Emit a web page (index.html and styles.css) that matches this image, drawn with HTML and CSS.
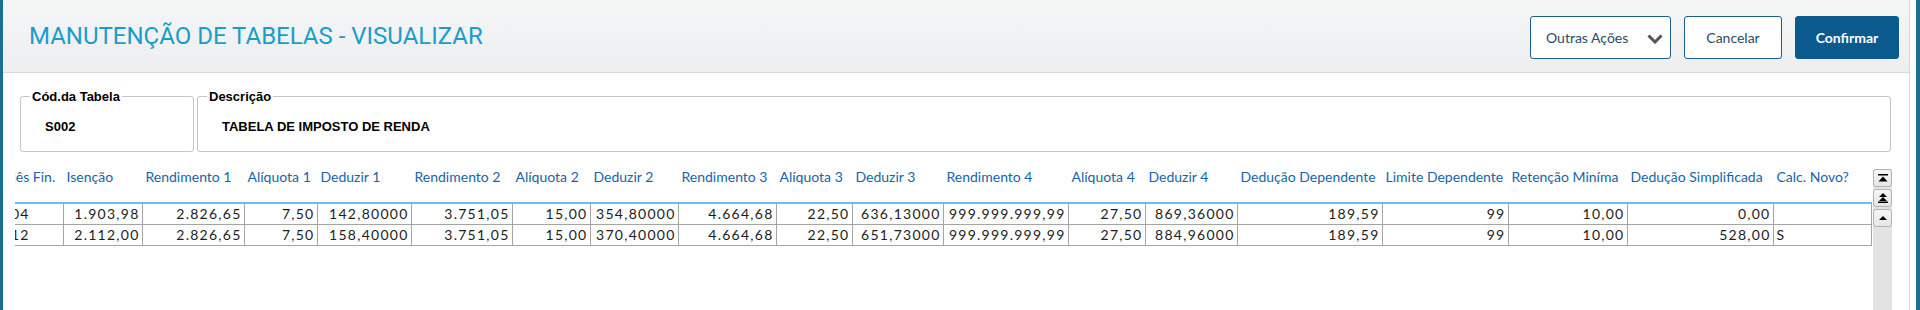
FILE: index.html
```html
<!DOCTYPE html>
<html lang="pt-BR">
  <head>
    <meta charset="UTF-8" />
    <meta name="viewport" content="width=device-width, initial-scale=1.0" />
    <title>Manutenção de Tabelas</title>
    <link rel="stylesheet" href="styles.css">
  </head>
  <body>
    <div class="screen">
      <div class="edge-left"></div>
      <main class="page">
        <header class="topbar">
          <h1>MANUTENÇÃO DE TABELAS - VISUALIZAR</h1>
          <div class="actions">
            <button class="btn btn-more">
              <span>Outras Ações</span>
              <svg width="16" height="10" viewBox="0 0 16 10"><path d="M1.5 1.5 L8 8 L14.5 1.5" fill="none" stroke="#555" stroke-width="3"/></svg>
            </button>
            <button class="btn">Cancelar</button>
            <button class="btn btn-primary">Confirmar</button>
          </div>
        </header>

        <div class="fields">
          <fieldset class="group group-code">
            <legend>Cód.da Tabela</legend>
            <div class="value">S002</div>
          </fieldset>
          <fieldset class="group group-desc">
            <legend>Descrição</legend>
            <div class="value">TABELA DE IMPOSTO DE RENDA</div>
          </fieldset>
        </div>

        <div class="browse">
          <div class="grid-view">
            <table>
              <colgroup>
                <col style="width:68px"><col style="width:79px"><col style="width:102px"><col style="width:73px">
                <col style="width:94px"><col style="width:101px"><col style="width:78px"><col style="width:88px">
                <col style="width:98px"><col style="width:76px"><col style="width:91px"><col style="width:125px">
                <col style="width:77px"><col style="width:92px"><col style="width:145px"><col style="width:126px">
                <col style="width:119px"><col style="width:146px"><col style="width:98px">
              </colgroup>
              <thead>
                <tr>
                  <th class="first">Mês Fin.</th>
                  <th>Isenção</th>
                  <th>Rendimento 1</th>
                  <th>Alíquota 1</th>
                  <th>Deduzir 1</th>
                  <th>Rendimento 2</th>
                  <th>Alíquota 2</th>
                  <th>Deduzir 2</th>
                  <th>Rendimento 3</th>
                  <th>Alíquota 3</th>
                  <th>Deduzir 3</th>
                  <th>Rendimento 4</th>
                  <th>Alíquota 4</th>
                  <th>Deduzir 4</th>
                  <th>Dedução Dependente</th>
                  <th>Limite Dependente</th>
                  <th>Retenção Miníma</th>
                  <th>Dedução Simplificada</th>
                  <th>Calc. Novo?</th>
                </tr>
              </thead>
              <tbody>
                <tr>
                  <td class="first">04</td>
                  <td>1.903,98</td>
                  <td>2.826,65</td>
                  <td>7,50</td>
                  <td>142,80000</td>
                  <td>3.751,05</td>
                  <td>15,00</td>
                  <td>354,80000</td>
                  <td>4.664,68</td>
                  <td>22,50</td>
                  <td>636,13000</td>
                  <td>999.999.999,99</td>
                  <td>27,50</td>
                  <td>869,36000</td>
                  <td>189,59</td>
                  <td>99</td>
                  <td>10,00</td>
                  <td>0,00</td>
                  <td class="text"></td>
                </tr>
                <tr>
                  <td class="first">12</td>
                  <td>2.112,00</td>
                  <td>2.826,65</td>
                  <td>7,50</td>
                  <td>158,40000</td>
                  <td>3.751,05</td>
                  <td>15,00</td>
                  <td>370,40000</td>
                  <td>4.664,68</td>
                  <td>22,50</td>
                  <td>651,73000</td>
                  <td>999.999.999,99</td>
                  <td>27,50</td>
                  <td>884,96000</td>
                  <td>189,59</td>
                  <td>99</td>
                  <td>10,00</td>
                  <td>528,00</td>
                  <td class="text">S</td>
                </tr>
              </tbody>
            </table>
          </div>

          <div class="scroller">
            <button class="scroll-btn">
              <svg width="10" height="10" viewBox="0 0 10 10"><rect x="0" y="1" width="10" height="1.5" fill="#000"/><path d="M0.5 8.5 L5 3.5 L9.5 8.5 Z" fill="#000"/></svg>
            </button>
            <button class="scroll-btn">
              <svg width="10" height="12" viewBox="0 0 10 12"><path d="M1 5 L5 1 L9 5 Z M1 9 L5 5 L9 9 Z" fill="#000"/><rect x="0" y="9.5" width="10" height="1.5" fill="#000"/></svg>
            </button>
            <button class="scroll-btn">
              <svg width="10" height="8" viewBox="0 0 10 8"><path d="M1 6 L5 2 L9 6 Z" fill="#000"/></svg>
            </button>
          </div>
        </div>
      </main>
      <div class="edge-line"></div>
      <div class="edge-right"></div>
    </div>
  </body>
</html>
```

FILE: styles.css
```css
body {
  margin: 0;
  width: 1920px;
  height: 310px;
  overflow: hidden;
  background: #fff;
}

.screen {
  display: flex;
  height: 310px;
}
.edge-left {
  width: 3px;
  background: #17728d;
}
.edge-line {
  width: 1px;
  background: #d6d6d6;
  margin-right: 6px;
}
.edge-right {
  width: 4px;
  background: #17728d;
}
.page {
  width: 1906px;
}

/* barra do topo */
.topbar {
  height: 72px;
  border-bottom: 1px solid #d9dadb;
  background: linear-gradient(#f5f6f6, #eceef0);
  display: flex;
  align-items: center;
  justify-content: space-between;
  padding: 0 10px 0 26px;
}
.topbar h1 {
  margin: 0;
  font: 400 24px/28px Roboto, sans-serif;
  color: #1b9dca;
}
.actions {
  display: flex;
  gap: 13px;
  margin-top: 3px;
}
.btn {
  height: 43px;
  box-sizing: border-box;
  border: 1px solid #1c5d8c;
  border-radius: 3px;
  background: #fff;
  color: #2e4a66;
  font: 400 14px/16px Lato, sans-serif;
  padding: 0;
}
.btn-more {
  width: 141px;
  display: flex;
  align-items: center;
  justify-content: space-between;
  padding: 0 7px 0 15px;
}
.btn-more svg {
  margin-top: 2px;
}
.btn:nth-child(2) {
  width: 98px;
}
.btn-primary {
  width: 104px;
  background: #0b5a8e;
  border-color: #0b5a8e;
  color: #fff;
  font-weight: 700;
}

/* campos */
.fields {
  display: flex;
  gap: 3px;
  padding: 16px 18px 0 17px;
}
.group {
  margin: 0;
  padding: 15px 0 17px 0;
  border: 1px solid #c6c6c6;
  border-radius: 3px;
  box-sizing: border-box;
  font: 700 13px/15px "Liberation Sans", Arial, sans-serif;
  color: #000;
}
.group legend {
  margin-left: 9px;
  padding: 0 2px;
}
.group-code {
  width: 174px;
}
.group-desc {
  flex: 1;
}
.value {
  padding-left: 24px;
}

/* grade */
.browse {
  display: flex;
  margin-top: 8px;
  padding-left: 12px;
}
.grid-view {
  width: 1857px;
  overflow: hidden;
}
table {
  margin-left: -20px;
  width: 1876px;
  table-layout: fixed;
  border-collapse: collapse;
  font-family: Lato, sans-serif;
  font-size: 14px;
}
th {
  text-align: left;
  font-weight: 400;
  line-height: 16px;
  color: #1565a8;
  padding: 9px 2px 17px 3px;
  border-bottom: 2px solid #6bbcf1;
  border-right: 1px solid #fff;
  white-space: nowrap;
  overflow: hidden;
}
th.first {
  padding-left: 8px;
}
td {
  height: 20px;
  padding: 0 2px 0 2px;
  line-height: 20px;
  text-align: right;
  letter-spacing: 1.25px;
  color: #1c1c1c;
  border-right: 1px solid #a4a4a4;
  border-bottom: 1px solid #a4a4a4;
  white-space: nowrap;
  overflow: hidden;
}
td.first {
  text-align: left;
  padding-left: 16px;
}
td.text {
  text-align: left;
  padding-left: 3px;
}

.scroller {
  width: 19px;
  height: 150px;
  margin: 9px 0 0 1px;
  background: #e3e3e3;
  display: flex;
  flex-direction: column;
  gap: 2px;
}
.scroll-btn {
  height: 18px;
  width: 19px;
  padding: 0;
  border: 1px solid #b3b3b3;
  border-radius: 3px;
  background: linear-gradient(#f6f6f6, #e6e6e6);
  display: flex;
  align-items: center;
  justify-content: center;
}
```
